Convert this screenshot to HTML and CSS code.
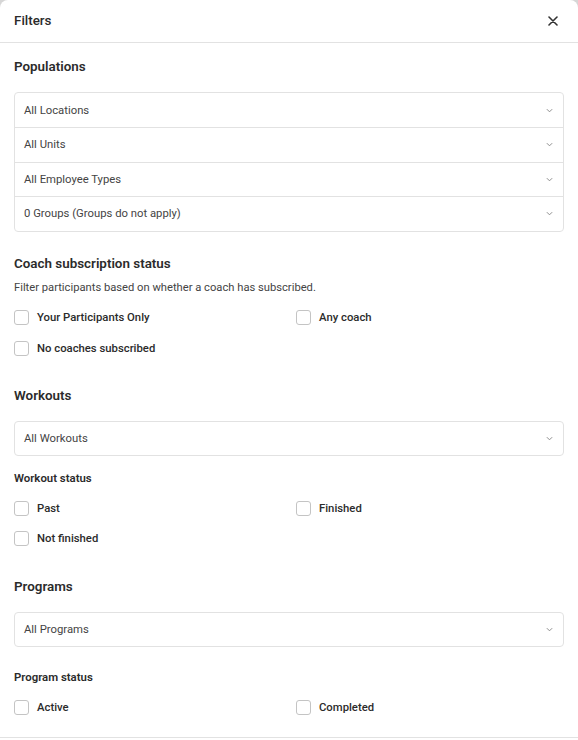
FILE: index.html
```html
<!DOCTYPE html>
<html>
<head>
<meta charset="utf-8">
<link rel="stylesheet" href="styles.css">
</head>
<body>
<div class="dialog">
  <div class="header">
    <div class="title">Filters</div>
    <svg class="close" width="10" height="10" viewBox="0 0 10 10"><path d="M1 1L9 9M9 1L1 9" stroke="#333" stroke-width="1.6" stroke-linecap="round"/></svg>
  </div>
  <div class="body">
    <div class="h">Populations</div>
    <div class="group">
      <div class="sel"><span>All Locations</span><svg class="chev" viewBox="0 0 8 5"><path d="M1 1L4 4L7 1" fill="none" stroke="#888" stroke-width="1.1"/></svg></div>
      <div class="sel"><span>All Units</span><svg class="chev" viewBox="0 0 8 5"><path d="M1 1L4 4L7 1" fill="none" stroke="#888" stroke-width="1.1"/></svg></div>
      <div class="sel"><span>All Employee Types</span><svg class="chev" viewBox="0 0 8 5"><path d="M1 1L4 4L7 1" fill="none" stroke="#888" stroke-width="1.1"/></svg></div>
      <div class="sel"><span>0 Groups (Groups do not apply)</span><svg class="chev" viewBox="0 0 8 5"><path d="M1 1L4 4L7 1" fill="none" stroke="#888" stroke-width="1.1"/></svg></div>
    </div>

    <div class="h h-coach">Coach subscription status</div>
    <div class="desc">Filter participants based on whether a coach has subscribed.</div>
    <div class="checks checks-coach">
      <label class="chk"><span class="box"></span>Your Participants Only</label>
      <label class="chk"><span class="box"></span>Any coach</label>
      <label class="chk"><span class="box"></span>No coaches subscribed</label>
    </div>

    <div class="h h-work">Workouts</div>
    <div class="group single">
      <div class="sel"><span>All Workouts</span><svg class="chev" viewBox="0 0 8 5"><path d="M1 1L4 4L7 1" fill="none" stroke="#888" stroke-width="1.1"/></svg></div>
    </div>
    <div class="sub">Workout status</div>
    <div class="checks checks-work">
      <label class="chk"><span class="box"></span>Past</label>
      <label class="chk"><span class="box"></span>Finished</label>
      <label class="chk"><span class="box"></span>Not finished</label>
    </div>

    <div class="h h-prog">Programs</div>
    <div class="group single">
      <div class="sel"><span>All Programs</span><svg class="chev" viewBox="0 0 8 5"><path d="M1 1L4 4L7 1" fill="none" stroke="#888" stroke-width="1.1"/></svg></div>
    </div>
    <div class="sub sub-prog">Program status</div>
    <div class="checks checks-prog">
      <label class="chk"><span class="box"></span>Active</label>
      <label class="chk"><span class="box"></span>Completed</label>
    </div>
  </div>
</div>
</body>
</html>
```
FILE: styles.css
```css
* { box-sizing: border-box; }
html, body { margin: 0; padding: 0; }
body {
  background: #d6d6d6;
  font-family: Roboto, "Liberation Sans", Arial, sans-serif;
  color: #2b2b2b;
}
.dialog {
  background: #fff;
  width: 578px;
  height: 740px;
  border-radius: 8px 8px 0 0;
  overflow: hidden;
}
.header {
  height: 43px;
  border-bottom: 1px solid #e2e2e2;
  display: flex;
  align-items: center;
  justify-content: space-between;
  padding: 0 20px 0 14px;
}
.title {
  font-size: 13.4px;
  font-weight: 500;
  color: #2b2b2b;
  margin-top: -1px;
}
.close { margin-top: -1px; }
.body {
  padding: 14px 14px 0 14px;
  border-bottom: 1px solid #e2e2e2;
  padding-bottom: 19px;
}
.h {
  font-size: 13.4px;
  font-weight: 600;
  line-height: 20px;
  color: #2b2b2b;
}
.group {
  margin-top: 15px;
  border: 1px solid #e2e2e2;
  border-radius: 4px;
}
.sel {
  height: 34.5px;
  display: flex;
  align-items: center;
  justify-content: space-between;
  padding: 0 10px 0 9px;
  font-size: 11.3px;
  color: #444;
  border-top: 1px solid #e2e2e2;
}
.sel:first-child { border-top: none; height: 34px; }
.group.single .sel { height: 33px; }
.chev { width: 7px; height: 5px; }
.h-coach { margin-top: 22px; }
.desc {
  margin-top: 6px;
  font-size: 11.2px;
  line-height: 16px;
  color: #444;
}
.checks {
  display: grid;
  grid-template-columns: 282px 1fr;
  row-gap: 11px;
}
.checks-coach { margin-top: 12px; }
.checks-work { margin-top: 13px; row-gap: 10px; }
.checks-prog { margin-top: 13px; }
.chk {
  display: flex;
  align-items: center;
  height: 20px;
  font-size: 11.3px;
  font-weight: 500;
  color: #2b2b2b;
}
.box {
  width: 15px;
  height: 15px;
  border: 1px solid #c4c4c4;
  border-radius: 3px;
  margin-right: 8px;
  flex: none;
}
.h-work { margin-top: 27px; }
.sub {
  margin-top: 14px;
  font-size: 11.4px;
  font-weight: 600;
  line-height: 16px;
  color: #2b2b2b;
}
.sub-prog { margin-top: 22px; }
.h-prog { margin-top: 28px; }
```
